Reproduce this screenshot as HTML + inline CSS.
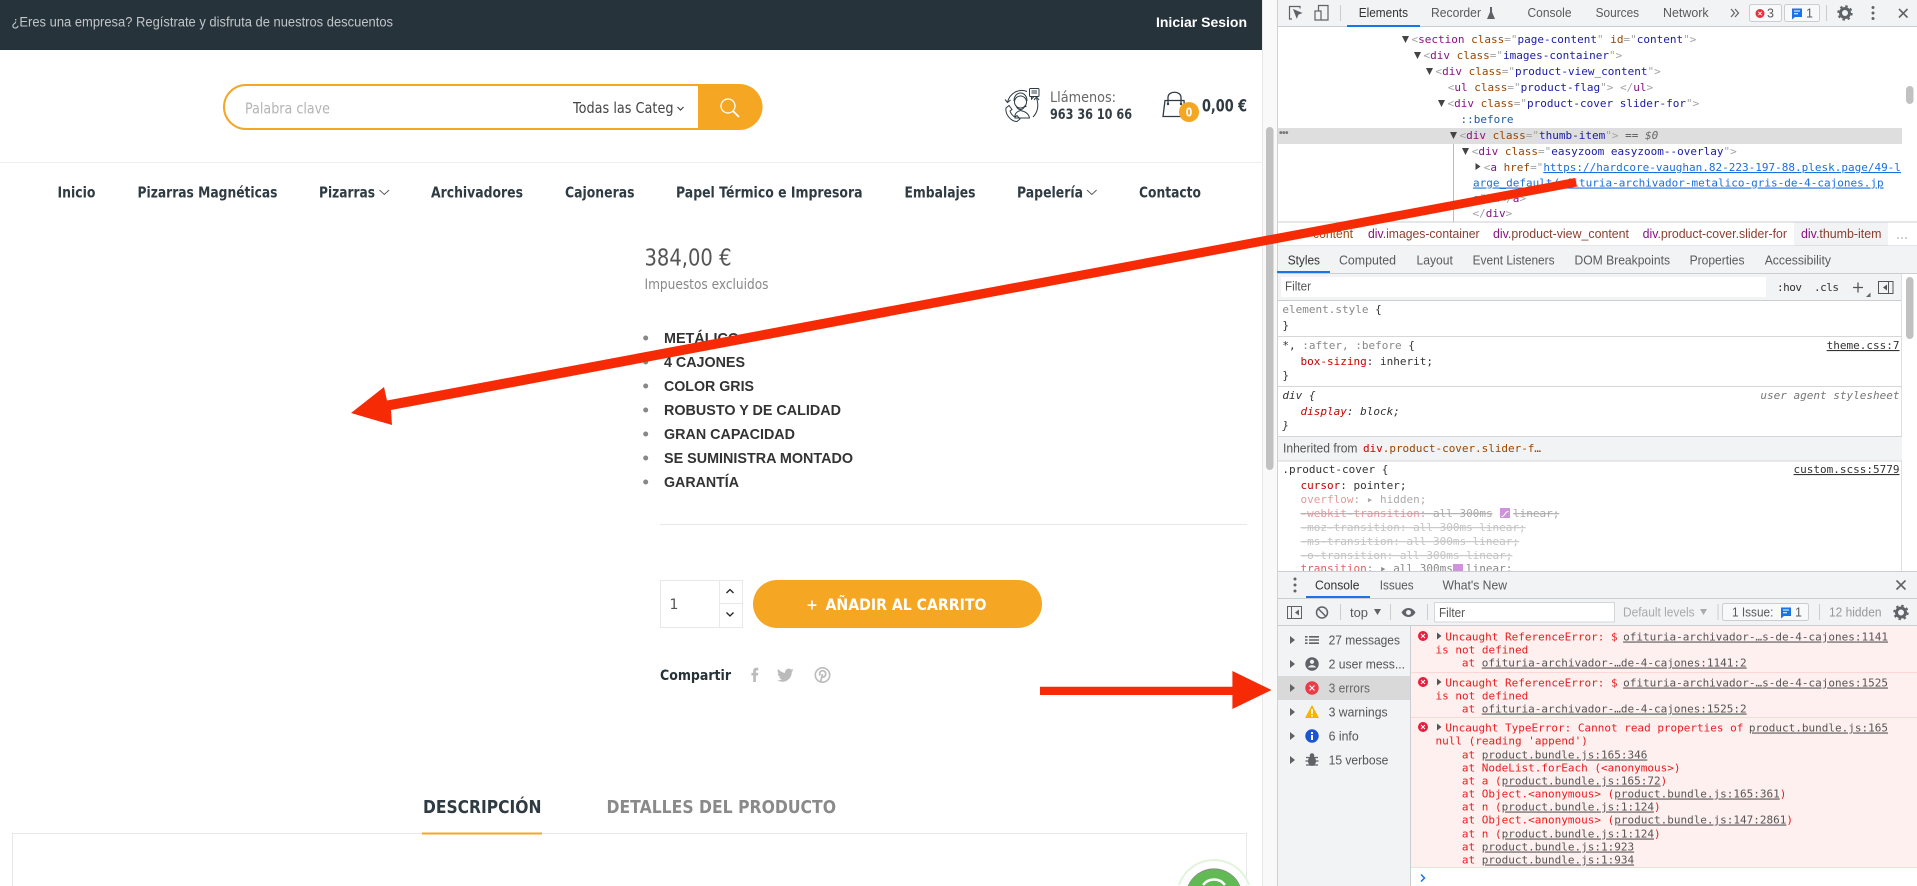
<!DOCTYPE html>
<html lang="es"><head><meta charset="utf-8"><title>Ofituria archivador metalico</title>
<style>
html,body{margin:0;padding:0;background:#fff;width:1917px;height:886px;overflow:hidden}
svg{display:block}
.o{font-family:"DejaVu Sans",sans-serif}
.ob{font-family:"DejaVu Sans",sans-serif;font-weight:700}
.a{font-family:"Liberation Sans",Arial,sans-serif}
.ab{font-family:"Liberation Sans",Arial,sans-serif;font-weight:700}
.m{font-family:"DejaVu Sans Mono",monospace;font-size:11px}
.t{fill:#881280}.n{fill:#994500}.v{fill:#1a1aa6}.g{fill:#a3a3a3}
.u{font-family:"Liberation Sans",Arial,sans-serif;font-size:12.5px;fill:#5a5a5a}
.e{fill:#e81c1c}.l{fill:#555;text-decoration:underline}
.r{fill:#c80000}.s{text-decoration:line-through}
</style></head><body>
<svg xmlns="http://www.w3.org/2000/svg" width="1917" height="886" viewBox="0 0 1917 886">
<rect width="1917" height="886" fill="#fff"/>
<!-- top bar -->
<rect width="1262" height="50" fill="#27333a"/>
<text class="a" x="11.5" y="26.5" font-size="13.5" fill="#c0c5c8" textLength="381.5" lengthAdjust="spacingAndGlyphs">¿Eres una empresa? Regístrate y disfruta de nuestros descuentos</text>
<text class="ab" x="1156" y="27" font-size="14" fill="#fff" textLength="91" lengthAdjust="spacingAndGlyphs">Iniciar Sesion</text>
<!-- search -->
<rect x="224" y="85" width="530" height="44" rx="22" fill="#fff" stroke="#f5a623" stroke-width="2"/>
<path d="M698 84H739.5A23 23 0 0 1 739.5 130H698Z" fill="#f5a623"/>
<text class="o" x="245" y="113.500" font-size="15" fill="#b4b4b4" textLength="85" lengthAdjust="spacingAndGlyphs">Palabra clave</text>
<text class="o" x="573" y="113" font-size="15" fill="#444" textLength="100.500" lengthAdjust="spacingAndGlyphs">Todas las Categ</text>
<path d="M677.500 107l3 3 3-3" fill="none" stroke="#444" stroke-width="1.200"/>
<circle cx="728" cy="106" r="7" fill="none" stroke="#fff" stroke-width="1.300"/>
<path d="M733 111l6 6" stroke="#fff" stroke-width="1.800" fill="none"/>
<!-- call icon -->
<g fill="none" stroke="#2f3b43" stroke-width="1">
<rect x="1029.500" y="88.500" width="9.500" height="8" rx="1"/>
<path d="M1031.500 91h5.500M1031.500 93h5.500M1031.500 96.500v2.500l2.500-2.500"/>
<path d="M1027 91.500C1019 88 1010 93 1007.500 102"/><path d="M1005 99.500l2.500 3 3-2.500"/>
<path d="M1036.500 98C1039 105 1038 112 1033 117"/><path d="M1034 100l2.500-3 2.500 3"/>
<circle cx="1020.500" cy="102" r="6"/>
<path d="M1014 101c0-5 3-8 6.500-8s6.500 3 6.500 8M1016 105.500c1 3 3 4 4.500 4s3.500-1 4.500-4M1026.500 106l-3 1.500"/>
<path d="M1015 118v-2c0-3 3-5 5.500-5.500 2.500.5 8 2 9 7.500z"/>
<path d="M1006 108l3-2.500 3 4-2 1.500c1 3 3 5 5 6l2-1.500 3 3.500-3 2.500c-6 0-12-7-11-13.500z"/>
</g>
<text class="o" x="1050" y="102" font-size="14.500" fill="#666" textLength="66" lengthAdjust="spacingAndGlyphs">Llámenos:</text>
<text class="ob" x="1050" y="119" font-size="14" fill="#333d45" textLength="82" lengthAdjust="spacingAndGlyphs">963 36 10 66</text>
<!-- bag -->
<g fill="none" stroke="#2f3b43" stroke-width="1.300">
<path d="M1165 100.500H1184L1185 116.500H1163Z"/>
<path d="M1168 104V97.500C1168 90.500 1181 90.500 1181 97.500V104"/>
</g>
<circle cx="1168" cy="104" r="1.200" fill="#2f3b43"/><circle cx="1181" cy="104" r="1.200" fill="#2f3b43"/>
<circle cx="1189" cy="112" r="10" fill="#f5a623"/>
<text class="ob" x="1185.750" y="116.500" font-size="12" fill="#fff" textLength="6.500" lengthAdjust="spacingAndGlyphs">0</text>
<text class="ob" x="1202" y="111.500" font-size="17" fill="#2f3b43" textLength="45" lengthAdjust="spacingAndGlyphs">0,00 €</text>
<!-- nav -->
<rect y="162" width="1262" height="1" fill="#eceeef"/>
<g fill="#2f3b43" font-size="15">
<text class="ob" x="57.500" y="197.500" textLength="38" lengthAdjust="spacingAndGlyphs">Inicio</text>
<text class="ob" x="137.500" y="197.500" textLength="140" lengthAdjust="spacingAndGlyphs">Pizarras Magnéticas</text>
<text class="ob" x="319" y="197.500" textLength="56" lengthAdjust="spacingAndGlyphs">Pizarras</text>
<text class="ob" x="431" y="197.500" textLength="92" lengthAdjust="spacingAndGlyphs">Archivadores</text>
<text class="ob" x="565" y="197.500" textLength="69.500" lengthAdjust="spacingAndGlyphs">Cajoneras</text>
<text class="ob" x="676" y="197.500" textLength="186.500" lengthAdjust="spacingAndGlyphs">Papel Térmico e Impresora</text>
<text class="ob" x="904.500" y="197.500" textLength="71" lengthAdjust="spacingAndGlyphs">Embalajes</text>
<text class="ob" x="1017" y="197.500" textLength="66" lengthAdjust="spacingAndGlyphs">Papelería</text>
<text class="ob" x="1139" y="197.500" textLength="62" lengthAdjust="spacingAndGlyphs">Contacto</text>
</g>
<path d="M379.500 190l4.800 4.500 4.800-4.500M1087 190l4.800 4.500 4.800-4.500" fill="none" stroke="#555" stroke-width=".9"/>
<!-- price -->
<text class="o" x="644.500" y="265.500" font-size="23" fill="#555" textLength="87" lengthAdjust="spacingAndGlyphs">384,00 €</text>
<text class="o" x="644.500" y="289" font-size="14" fill="#888" textLength="124" lengthAdjust="spacingAndGlyphs">Impuestos excluidos</text>
<!-- list -->
<g fill="#888"><circle cx="645.700" cy="338" r="2.500"/><circle cx="645.700" cy="362" r="2.500"/><circle cx="645.700" cy="386" r="2.500"/><circle cx="645.700" cy="410" r="2.500"/><circle cx="645.700" cy="434" r="2.500"/><circle cx="645.700" cy="458" r="2.500"/><circle cx="645.700" cy="482" r="2.500"/></g>
<g fill="#333" font-size="15">
<text class="ab" x="664" y="343" textLength="75" lengthAdjust="spacingAndGlyphs">METÁLICO</text>
<text class="ab" x="664" y="367" textLength="81" lengthAdjust="spacingAndGlyphs">4 CAJONES</text>
<text class="ab" x="664" y="391" textLength="90" lengthAdjust="spacingAndGlyphs">COLOR GRIS</text>
<text class="ab" x="664" y="415" textLength="177" lengthAdjust="spacingAndGlyphs">ROBUSTO Y DE CALIDAD</text>
<text class="ab" x="664" y="439" textLength="131" lengthAdjust="spacingAndGlyphs">GRAN CAPACIDAD</text>
<text class="ab" x="664" y="463" textLength="189" lengthAdjust="spacingAndGlyphs">SE SUMINISTRA MONTADO</text>
<text class="ab" x="664" y="487" textLength="75" lengthAdjust="spacingAndGlyphs">GARANTÍA</text>
</g>
<rect x="660" y="524" width="587" height="1" fill="#e8e8e8"/>
<!-- qty -->
<rect x="660.500" y="580.500" width="82" height="47" fill="#fff" stroke="#e8e8e8"/>
<path d="M719.500 580v48M719.500 603.500H743" stroke="#e8e8e8" fill="none"/>
<text class="o" x="669.500" y="609" font-size="14" fill="#555">1</text>
<path d="M726.500 593l3.500-3.500 3.500 3.500M726.500 612.500l3.500 3.500 3.500-3.500" fill="none" stroke="#222" stroke-width="1.300"/>
<rect x="753" y="580" width="289" height="48" rx="24" fill="#f5a623"/>
<text class="ob" x="812" y="609.500" font-size="14" fill="#fff" text-anchor="middle">+</text>
<text class="ob" x="825.500" y="610" font-size="16" fill="#fff" textLength="161" lengthAdjust="spacingAndGlyphs">AÑADIR AL CARRITO</text>
<!-- share -->
<text class="ob" x="660" y="680" font-size="14" fill="#263238" textLength="71" lengthAdjust="spacingAndGlyphs">Compartir</text>
<path d="M753.200 682v-6.500h-1.800v-2.600h1.800v-1.800c0-2.200 1.300-3.300 3.200-3.300h1.900v2.600h-1.200c-.9 0-1.200.4-1.200 1.200v1.300h2.400l-.4 2.600h-2v6.500z" fill="#bbb"/>
<g transform="translate(786 675) scale(.85) translate(-787 -676)"><path d="M778.500 669.500c2 2.500 4.500 3.800 7.500 4-.5-3 2-5.500 4.700-5 1 0 1.800.5 2.500 1.200.8-.2 1.700-.5 2.300-1-.3 1-1 1.700-1.800 2.200.8-.1 1.500-.3 2.100-.6-.5.800-1.200 1.500-2 2 .2 6-4.500 11.700-11 11.700-2.200 0-4.200-.6-6-1.800 2.200.2 4-.4 5.500-1.500-1.800 0-3-1.200-3.600-2.500.6.100 1.200.1 1.700-.1-1.900-.5-3.100-2-3.100-3.900.5.300 1.100.5 1.700.5-1.800-1.200-2.300-3.500-1.500-5.200z" fill="#bbb"/></g>
<circle cx="822.500" cy="675" r="7.200" fill="none" stroke="#bbb" stroke-width="1.600"/>
<path d="M820.500 682l2-8M820 675.500c-1.300-3 1-5 2.800-4.800 2.700.3 3.500 2.700 2.500 4.800-.9 2-3 1.800-3.600.7" fill="none" stroke="#bbb" stroke-width="1.700"/>
<!-- tabs -->
<text class="ob" x="423" y="813" font-size="17.500" fill="#2f3b43" textLength="118.500" lengthAdjust="spacingAndGlyphs">DESCRIPCIÓN</text>
<text class="ob" x="606.500" y="813" font-size="17.500" fill="#8a8a8a" textLength="229.500" lengthAdjust="spacingAndGlyphs">DETALLES DEL PRODUCTO</text>
<path d="M12.500 886V833.500H1246.500V886" fill="none" stroke="#e8e8e8"/>
<rect x="422" y="832.500" width="120" height="2" fill="#f5a623"/>
<!-- whatsapp -->
<path d="M1179 885A37 37 0 0 1 1249 885Z" fill="#fff"/>
<path d="M1179 885A37 37 0 0 1 1249 885" fill="none" stroke="#e2f4dc" stroke-width="2"/>
<path d="M1187.600 886A28.600 28.600 0 0 1 1240.400 886Z" fill="#8a8a8a"/>
<path d="M1188 886A28.600 28.600 0 0 1 1240 886Z" fill="#62ba55"/>
<path d="M1203.100 885A13.500 13.500 0 0 1 1224.900 885" fill="none" stroke="#fff" stroke-width="2.500"/>
<!-- scrollbar -->
<rect x="1262" y="0" width="15.500" height="886" fill="#f9f9f9"/>
<rect x="1262" y="0" width="1" height="886" fill="#e8e8e8"/>
<rect x="1266" y="127" width="7.500" height="343" rx="3.700" fill="#c1c1c1"/>
<!-- DEVTOOLS -->
<rect x="1277" y="0" width="640" height="886" fill="#fff"/>
<rect x="1277" y="0" width="1" height="886" fill="#cfd1d4"/>
<rect x="1278" y="0" width="639" height="26" fill="#f1f3f4"/>
<rect x="1278" y="26" width="639" height="1" fill="#cbcdd1"/>
<rect x="1347" y="25" width="73" height="2" fill="#1a73e8"/>
<g fill="none" stroke="#5f6368" stroke-width="1.200">
<path d="M1300 8.500V6.500H1289.500V19H1292"/><path d="M1294 10l7 3-3 1.200-1.200 3z" fill="#5f6368"/>
<rect x="1315" y="11" width="6" height="9"/><path d="M1318.500 11V5.500H1328V20H1321"/>
</g>
<rect x="1340" y="5" width="1" height="16" fill="#cbcdd1"/>
<text class="u" x="1358.700" y="17" style="fill:#333" textLength="49.300" lengthAdjust="spacingAndGlyphs">Elements</text>
<text class="u" x="1431" y="17" textLength="50" lengthAdjust="spacingAndGlyphs">Recorder</text>
<path d="M1489 7h4M1490 7v5l-3 7h8l-3-7V7z" fill="#5f6368"/>
<text class="u" x="1527.500" y="17" textLength="44" lengthAdjust="spacingAndGlyphs">Console</text>
<text class="u" x="1595.600" y="17" textLength="43.500" lengthAdjust="spacingAndGlyphs">Sources</text>
<text class="u" x="1663" y="17" textLength="45.600" lengthAdjust="spacingAndGlyphs">Network</text>
<path d="M1731 9l3.500 4-3.500 4M1735 9l3.500 4-3.500 4" fill="none" stroke="#5f6368" stroke-width="1.200"/>
<rect x="1749.500" y="4.500" width="32" height="17" rx="2" fill="#f8f9fa" stroke="#cbcdd1"/>
<circle cx="1760" cy="13.500" r="4.500" fill="#e8303a"/>
<path d="M1758.300 11.800l3.400 3.400m0-3.400l-3.400 3.400" stroke="#fff" stroke-width=".9"/>
<text class="u" x="1767" y="17.500">3</text>
<rect x="1784.500" y="4.500" width="35" height="17" rx="2" fill="#f8f9fa" stroke="#cbcdd1"/>
<path d="M1792 8.500h10v8.500h-7l-3 2.500z" fill="#1a73e8"/>
<path d="M1794 11h6M1794 13.800h4" stroke="#fff" stroke-width="1"/>
<text class="u" x="1806" y="17.500">1</text>
<rect x="1826" y="5" width="1" height="16" fill="#cbcdd1"/>
<circle cx="1845" cy="13" r="4.500" fill="none" stroke="#5f6368" stroke-width="3"/>
<circle cx="1845" cy="13" r="6.800" fill="none" stroke="#5f6368" stroke-width="1.800" stroke-dasharray="2.500 2.850"/>
<g fill="#5f6368"><circle cx="1873" cy="7.500" r="1.500"/><circle cx="1873" cy="13" r="1.500"/><circle cx="1873" cy="18.500" r="1.500"/></g>
<path d="M1899 9l8.500 8.500m0-8.500l-8.500 8.500" stroke="#5f6368" stroke-width="1.600"/>
<!-- DOM -->
<rect x="1278" y="128" width="624" height="16" fill="#dedede"/>
<rect x="1902" y="27" width="15" height="195" fill="#fff"/>
<rect x="1906" y="86" width="7.500" height="18" rx="3.700" fill="#c1c1c1"/>
<rect x="1453" y="144" width="1" height="78" fill="#a4bfe6"/>
<text class="a" x="1279" y="136" font-size="10" font-weight="700" letter-spacing="-.5" fill="#777">•••</text>
<g fill="#444">
<path d="M1402 36h7l-3.500 7zM1414 52h7l-3.500 7zM1426 68h7l-3.500 7zM1438 100h7l-3.500 7zM1450 132h7l-3.500 7zM1462 148h7l-3.500 7zM1475.500 163v7l5-3.500z"/>
</g>
<text class="m" x="1411.500" y="43"><tspan class="g">&lt;</tspan><tspan class="t">section</tspan> <tspan class="n">class</tspan><tspan class="g">="</tspan><tspan class="v">page-content</tspan><tspan class="g">"</tspan> <tspan class="n">id</tspan><tspan class="g">="</tspan><tspan class="v">content</tspan><tspan class="g">"&gt;</tspan></text>
<text class="m" x="1423.500" y="59"><tspan class="g">&lt;</tspan><tspan class="t">div</tspan> <tspan class="n">class</tspan><tspan class="g">="</tspan><tspan class="v">images-container</tspan><tspan class="g">"&gt;</tspan></text>
<text class="m" x="1435.500" y="75"><tspan class="g">&lt;</tspan><tspan class="t">div</tspan> <tspan class="n">class</tspan><tspan class="g">="</tspan><tspan class="v">product-view_content</tspan><tspan class="g">"&gt;</tspan></text>
<text class="m" x="1447.800" y="91"><tspan class="g">&lt;</tspan><tspan class="t">ul</tspan> <tspan class="n">class</tspan><tspan class="g">="</tspan><tspan class="v">product-flag</tspan><tspan class="g">"&gt; &lt;/</tspan><tspan class="t">ul</tspan><tspan class="g">&gt;</tspan></text>
<text class="m" x="1447.500" y="107"><tspan class="g">&lt;</tspan><tspan class="t">div</tspan> <tspan class="n">class</tspan><tspan class="g">="</tspan><tspan class="v">product-cover slider-for</tspan><tspan class="g">"&gt;</tspan></text>
<text class="m" x="1460.500" y="123" fill="#1a5ca6">::before</text>
<text class="m" x="1459.500" y="139"><tspan class="g">&lt;</tspan><tspan class="t">div</tspan> <tspan class="n">class</tspan><tspan class="g">="</tspan><tspan class="v">thumb-item</tspan><tspan class="g">"&gt;</tspan> <tspan fill="#555">==</tspan> <tspan fill="#666" font-style="italic">$0</tspan></text>
<text class="m" x="1471.800" y="155"><tspan class="g">&lt;</tspan><tspan class="t">div</tspan> <tspan class="n">class</tspan><tspan class="g">="</tspan><tspan class="v">easyzoom easyzoom--overlay</tspan><tspan class="g">"&gt;</tspan></text>
<text class="m" x="1483.700" y="171"><tspan class="g">&lt;</tspan><tspan class="t">a</tspan> <tspan class="n">href</tspan><tspan class="g">="</tspan><tspan fill="#1a6fe0" text-decoration="underline">https://hardcore-vaughan.82-223-197-88.plesk.page/49-l</tspan></text>
<text class="m" x="1473" y="186.500" fill="#1a6fe0" text-decoration="underline">arge_default/ofituria-archivador-metalico-gris-de-4-cajones.jp</text>
<text class="m" x="1473" y="202"><tspan fill="#1a6fe0" text-decoration="underline">g</tspan><tspan class="g">"&gt;…&lt;/</tspan><tspan class="t">a</tspan><tspan class="g">&gt;</tspan></text>
<text class="m" x="1472.500" y="217"><tspan class="g">&lt;/</tspan><tspan class="t">div</tspan><tspan class="g">&gt;</tspan></text>
<!-- breadcrumb -->
<rect x="1278" y="222" width="639" height="24" fill="#fff"/>
<rect x="1278" y="221.500" width="639" height="1" fill="#cbcdd1"/>
<rect x="1278" y="245.500" width="639" height="1" fill="#cbcdd1"/>
<rect x="1794" y="222.500" width="94" height="23" fill="#f1f3f4"/>
<text class="u" x="1313" y="238" style="fill:#9a4a12" textLength="40" lengthAdjust="spacingAndGlyphs">content</text>
<text class="u" x="1368" y="238" textLength="111.600" lengthAdjust="spacingAndGlyphs"><tspan style="fill:#881280">div</tspan><tspan style="fill:#8a3f30">.images-container</tspan></text>
<text class="u" x="1493" y="238" textLength="136" lengthAdjust="spacingAndGlyphs"><tspan style="fill:#881280">div</tspan><tspan style="fill:#8a3f30">.product-view_content</tspan></text>
<text class="u" x="1642.600" y="238" textLength="144.400" lengthAdjust="spacingAndGlyphs"><tspan style="fill:#881280">div</tspan><tspan style="fill:#8a3f30">.product-cover.slider-for</tspan></text>
<text class="u" x="1801" y="238" textLength="80.500" lengthAdjust="spacingAndGlyphs"><tspan style="fill:#881280">div</tspan><tspan style="fill:#8a3f30">.thumb-item</tspan></text>
<g fill="#999"><circle cx="1898" cy="238" r=".8"/><circle cx="1902" cy="238" r=".8"/><circle cx="1906" cy="238" r=".8"/></g>
<!-- styles tabs -->
<rect x="1278" y="246" width="639" height="27" fill="#f1f3f4"/>
<rect x="1278" y="273" width="639" height="1" fill="#cbcdd1"/>
<rect x="1277" y="271" width="53" height="2" fill="#1a73e8"/>
<text class="u" x="1287.700" y="264.500" style="fill:#333" textLength="32.300" lengthAdjust="spacingAndGlyphs">Styles</text>
<text class="u" x="1339" y="264.500" textLength="57" lengthAdjust="spacingAndGlyphs">Computed</text>
<text class="u" x="1416.500" y="264.500" textLength="36.300" lengthAdjust="spacingAndGlyphs">Layout</text>
<text class="u" x="1472.600" y="264.500" textLength="82" lengthAdjust="spacingAndGlyphs">Event Listeners</text>
<text class="u" x="1574.500" y="264.500" textLength="95.500" lengthAdjust="spacingAndGlyphs">DOM Breakpoints</text>
<text class="u" x="1689.600" y="264.500" textLength="54.900" lengthAdjust="spacingAndGlyphs">Properties</text>
<text class="u" x="1764.700" y="264.500" textLength="66.300" lengthAdjust="spacingAndGlyphs">Accessibility</text>
<!-- filter row -->
<rect x="1278" y="274" width="624" height="26" fill="#f1f3f4"/>
<rect x="1281" y="277" width="485" height="20" fill="#fff"/>
<text class="u" x="1285" y="290.500" style="fill:#555" textLength="26" lengthAdjust="spacingAndGlyphs">Filter</text>
<text class="m" x="1777" y="291" fill="#333" textLength="25">:hov</text>
<text class="m" x="1814" y="291" fill="#333" textLength="25">.cls</text>
<path d="M1853 287.500h10M1858 282.500v10" stroke="#555" stroke-width="1.300"/>
<path d="M1866 297h4.500v-4.500z" fill="#666"/>
<rect x="1878.500" y="281.500" width="14.500" height="12" fill="none" stroke="#555"/>
<path d="M1888.500 281.500v12" stroke="#555"/><path d="M1887 284.500v6l-4-3z" fill="#555"/>
<rect x="1278" y="300" width="624" height="1" fill="#cbcdd1"/>
<!-- styles panes -->
<rect x="1902" y="274" width="15" height="297" fill="#fff"/>
<rect x="1906" y="277" width="7.500" height="62" rx="3.700" fill="#c1c1c1"/>
<rect x="1901" y="274" width="1" height="297" fill="#e0e0e0"/>
<text class="m" x="1282.400" y="313" fill="#888">element.style <tspan fill="#333">{</tspan></text>
<text class="m" x="1282.400" y="329" fill="#333">}</text>
<rect x="1278" y="336" width="624" height="1" fill="#d5d6d8"/>
<text class="m" x="1282.400" y="349" fill="#333">*, <tspan fill="#888">:after, :before</tspan> {</text>
<text class="m" x="1300.500" y="365" fill="#333"><tspan fill="#c80000">box-sizing</tspan>: inherit;</text>
<text class="m" x="1282.400" y="379" fill="#333">}</text>
<text class="m" x="1899.500" y="349" fill="#333" text-anchor="end" text-decoration="underline">theme.css:7</text>
<rect x="1278" y="386" width="624" height="1" fill="#d5d6d8"/>
<g font-style="italic">
<text class="m" x="1282.400" y="399" fill="#333">div {</text>
<text class="m" x="1300.500" y="415" fill="#333"><tspan fill="#c80000">display</tspan>: block;</text>
<text class="m" x="1282.400" y="429" fill="#333">}</text>
<text class="m" x="1899.500" y="399" fill="#777" text-anchor="end">user agent stylesheet</text>
</g>
<rect x="1278" y="436" width="624" height="25" fill="#f1f3f4"/>
<rect x="1278" y="436" width="624" height="1" fill="#d5d6d8"/>
<rect x="1278" y="460.500" width="624" height="1" fill="#d5d6d8"/>
<text class="u" x="1283" y="452.500" style="fill:#555" textLength="74.500" lengthAdjust="spacingAndGlyphs">Inherited from</text>
<text class="m" x="1363" y="452" textLength="178"><tspan fill="#c80000">div</tspan><tspan fill="#994500">.product-cover.slider-f…</tspan></text>
<text class="m" x="1282.400" y="473" fill="#333">.product-cover {</text>
<text class="m" x="1899.500" y="473" fill="#333" text-anchor="end" text-decoration="underline">custom.scss:5779</text>
<text class="m" x="1300.500" y="489" fill="#333"><tspan fill="#c80000">cursor</tspan>: pointer;</text>
<text class="m" x="1300.500" y="503" fill="#aaa"><tspan fill="#e69a9a">overflow</tspan>: <tspan fill="#aaa">▸</tspan> hidden;</text>
<text class="m s" x="1300.500" y="517" fill="#aaa"><tspan fill="#e69a9a">-webkit-transition</tspan>: all 300ms</text>
<rect x="1500" y="508" width="10" height="10" fill="#cf92dc"/><path d="M1501.500 516.500c4 0 3-5 7-5" stroke="#fff" fill="none"/>
<text class="m s" x="1513" y="517" fill="#aaa">linear;</text>
<text class="m s" x="1300.500" y="531" fill="#c4c4c4">-moz-transition: all 300ms linear;</text>
<text class="m s" x="1300.500" y="545" fill="#c4c4c4">-ms-transition: all 300ms linear;</text>
<text class="m s" x="1300.500" y="559" fill="#c4c4c4">-o-transition: all 300ms linear;</text>
<text class="m" x="1300.500" y="572" fill="#888"><tspan fill="#e06060">transition</tspan>: ▸ all 300ms</text>
<rect x="1453" y="564" width="10" height="7" fill="#cf92dc"/>
<text class="m" x="1466" y="572" fill="#888">linear;</text>
<!-- drawer -->
<rect x="1278" y="571" width="639" height="27" fill="#f1f3f4"/>
<rect x="1278" y="571" width="639" height="1" fill="#cbcdd1"/>
<rect x="1278" y="598" width="639" height="1" fill="#cbcdd1"/>
<g fill="#5f6368"><circle cx="1295" cy="579" r="1.500"/><circle cx="1295" cy="585" r="1.500"/><circle cx="1295" cy="591" r="1.500"/></g>
<rect x="1306" y="596" width="64" height="2" fill="#1a73e8"/>
<text class="u" x="1315" y="589.500" style="fill:#333" textLength="44.500" lengthAdjust="spacingAndGlyphs">Console</text>
<text class="u" x="1379.800" y="589.500" textLength="33.800" lengthAdjust="spacingAndGlyphs">Issues</text>
<text class="u" x="1442.500" y="589.500" textLength="64.500" lengthAdjust="spacingAndGlyphs">What's New</text>
<path d="M1896.500 580.500l9 9m0-9l-9 9" stroke="#5f6368" stroke-width="1.600"/>
<!-- console toolbar -->
<rect x="1278" y="599" width="639" height="26" fill="#f1f3f4"/>
<rect x="1278" y="625" width="639" height="1" fill="#cbcdd1"/>
<rect x="1287.500" y="606.500" width="14" height="12" fill="none" stroke="#5f6368"/>
<path d="M1291.500 606.500v12" stroke="#5f6368"/><path d="M1299 609.500v6l-4-3z" fill="#5f6368"/>
<circle cx="1322" cy="612.500" r="5.500" fill="none" stroke="#5f6368" stroke-width="1.500"/>
<path d="M1318 608.500l8 8" stroke="#5f6368" stroke-width="1.500"/>
<rect x="1340" y="604" width="1" height="16" fill="#cbcdd1"/>
<text class="u" x="1350" y="617" textLength="18" lengthAdjust="spacingAndGlyphs">top</text>
<path d="M1374 609h7l-3.500 6z" fill="#5f6368"/>
<rect x="1390" y="604" width="1" height="16" fill="#cbcdd1"/>
<path d="M1401.500 612.500c3.500-6 10.500-6 14 0-3.500 6-10.500 6-14 0z" fill="#5f6368"/>
<circle cx="1408.500" cy="612.500" r="2.500" fill="#f1f3f4"/>
<rect x="1427" y="604" width="1" height="16" fill="#cbcdd1"/>
<rect x="1434.500" y="602.500" width="180" height="19.500" fill="#fff" stroke="#d5d6d8"/>
<text class="u" x="1439" y="617" style="fill:#555" textLength="26" lengthAdjust="spacingAndGlyphs">Filter</text>
<text class="u" x="1623" y="616.500" style="fill:#aaa" textLength="71.600" lengthAdjust="spacingAndGlyphs">Default levels</text>
<path d="M1700 609h7l-3.500 6z" fill="#aaa"/>
<rect x="1717.500" y="604" width="1" height="16" fill="#cbcdd1"/>
<rect x="1722.500" y="603.500" width="86" height="17" rx="2" fill="#f8f9fa" stroke="#cbcdd1"/>
<text class="u" x="1732" y="616.500" textLength="41.400" lengthAdjust="spacingAndGlyphs">1 Issue:</text>
<path d="M1781 607.500h10v8.500h-7l-3 2.500z" fill="#1a73e8"/>
<path d="M1783 610h6M1783 612.800h4" stroke="#fff" stroke-width="1"/>
<text class="u" x="1795" y="616.500">1</text>
<rect x="1819" y="604" width="1" height="16" fill="#cbcdd1"/>
<text class="u" x="1829" y="616.500" style="fill:#999" textLength="52.500" lengthAdjust="spacingAndGlyphs">12 hidden</text>
<circle cx="1901" cy="612.500" r="4.500" fill="none" stroke="#5f6368" stroke-width="3"/>
<circle cx="1901" cy="612.500" r="6.800" fill="none" stroke="#5f6368" stroke-width="1.800" stroke-dasharray="2.500 2.850"/>
<!-- sidebar -->
<rect x="1278" y="626" width="132" height="260" fill="#f1f3f4"/>
<rect x="1278" y="676" width="132" height="24" fill="#d9d9d9"/>
<rect x="1410" y="626" width="1" height="260" fill="#cbcdd1"/>
<g fill="#5f6368">
<path d="M1290 636v8l5-4zM1290 660v8l5-4zM1290 684v8l5-4zM1290 708v8l5-4zM1290 732v8l5-4zM1290 756v8l5-4z"/>
<path d="M1305 636h2.500v1.600H1305zM1309 636h10v1.600h-10zM1305 639.200h2.500v1.600H1305zM1309 639.200h10v1.600h-10zM1305 642.400h2.500v1.600H1305zM1309 642.400h10v1.600h-10z"/>
<circle cx="1312" cy="664" r="6.700"/>
</g>
<circle cx="1312" cy="661.800" r="2.100" fill="#f1f3f4"/><path d="M1308 667.500c1-3 7-3 8 0z" fill="#f1f3f4"/>
<circle cx="1312" cy="688" r="6.700" fill="#ea3b46"/>
<path d="M1309.500 685.500l5 5m0-5l-5 5" stroke="#fff" stroke-width="1.200"/>
<path d="M1312 705l7 13h-14z" fill="#f4b400"/><rect x="1311.200" y="709" width="1.600" height="5" fill="#fff"/><rect x="1311.200" y="715" width="1.600" height="1.600" fill="#fff"/>
<circle cx="1312" cy="736" r="6.700" fill="#1a56d0"/><rect x="1311" y="735" width="2" height="5" fill="#fff"/><rect x="1311" y="732" width="2" height="2" fill="#fff"/>
<ellipse cx="1312" cy="761" rx="4" ry="5" fill="#5f6368"/><circle cx="1312" cy="755.500" r="2.300" fill="#5f6368"/>
<path d="M1306 757.500l12 0M1305.500 761h13M1306 765l12 0" stroke="#5f6368" stroke-width="1.300"/>
<text class="u" x="1328.600" y="644.500" style="fill:#555" textLength="71.400" lengthAdjust="spacingAndGlyphs">27 messages</text>
<text class="u" x="1328.600" y="668.500" style="fill:#555" textLength="76.400" lengthAdjust="spacingAndGlyphs">2 user mess...</text>
<text class="u" x="1328.600" y="692.500" style="fill:#666" textLength="41.400" lengthAdjust="spacingAndGlyphs">3 errors</text>
<text class="u" x="1328.600" y="716.500" style="fill:#555" textLength="59" lengthAdjust="spacingAndGlyphs">3 warnings</text>
<text class="u" x="1328.600" y="740.500" style="fill:#555" textLength="30.100" lengthAdjust="spacingAndGlyphs">6 info</text>
<text class="u" x="1328.600" y="764.500" style="fill:#555" textLength="59.800" lengthAdjust="spacingAndGlyphs">15 verbose</text>
<!-- console messages -->
<rect x="1411" y="626" width="506" height="241" fill="#fff0f0"/>
<rect x="1411" y="672" width="506" height="1" fill="#ffd6d6"/>
<rect x="1411" y="717" width="506" height="1" fill="#ffd6d6"/>
<rect x="1411" y="867" width="506" height="1" fill="#ffd6d6"/>
<g fill="#e81c3c"><circle cx="1423" cy="636" r="5"/><circle cx="1423" cy="682" r="5"/><circle cx="1423" cy="727" r="5"/></g>
<path d="M1421 634l4 4m0-4l-4 4M1421 680l4 4m0-4l-4 4M1421 725l4 4m0-4l-4 4" stroke="#fff" stroke-width="1"/>
<path d="M1437 632.500v7l4.500-3.500zM1437 678.500v7l4.500-3.500zM1437 723.500v7l4.500-3.500z" fill="#555"/>
<text class="m e" x="1445.400" y="640.500">Uncaught ReferenceError: $</text>
<text class="m l" x="1888" y="640.500" text-anchor="end">ofituria-archivador-…s-de-4-cajones:1141</text>
<text class="m e" x="1435.500" y="653.500">is not defined</text>
<text class="m e" x="1461.900" y="666.500">at <tspan fill="#555" text-decoration="underline">ofituria-archivador-…de-4-cajones:1141:2</tspan></text>
<text class="m e" x="1445.400" y="686.500">Uncaught ReferenceError: $</text>
<text class="m l" x="1888" y="686.500" text-anchor="end">ofituria-archivador-…s-de-4-cajones:1525</text>
<text class="m e" x="1435.500" y="699.500">is not defined</text>
<text class="m e" x="1461.900" y="712.500">at <tspan fill="#555" text-decoration="underline">ofituria-archivador-…de-4-cajones:1525:2</tspan></text>
<text class="m e" x="1445.400" y="731.500">Uncaught TypeError: Cannot read properties of</text>
<text class="m l" x="1888" y="731.500" text-anchor="end">product.bundle.js:165</text>
<text class="m e" x="1435.500" y="744.500">null (reading 'append')</text>
<text class="m e" x="1461.900" y="758.500">at <tspan fill="#555" text-decoration="underline">product.bundle.js:165:346</tspan></text>
<text class="m e" x="1461.900" y="771.500">at NodeList.forEach (&lt;anonymous&gt;)</text>
<text class="m e" x="1461.900" y="784.500">at a (<tspan fill="#555" text-decoration="underline">product.bundle.js:165:72</tspan>)</text>
<text class="m e" x="1461.900" y="797.500">at Object.&lt;anonymous&gt; (<tspan fill="#555" text-decoration="underline">product.bundle.js:165:361</tspan>)</text>
<text class="m e" x="1461.900" y="810.500">at n (<tspan fill="#555" text-decoration="underline">product.bundle.js:1:124</tspan>)</text>
<text class="m e" x="1461.900" y="823.500">at Object.&lt;anonymous&gt; (<tspan fill="#555" text-decoration="underline">product.bundle.js:147:2861</tspan>)</text>
<text class="m e" x="1461.900" y="837.500">at n (<tspan fill="#555" text-decoration="underline">product.bundle.js:1:124</tspan>)</text>
<text class="m e" x="1461.900" y="850.500">at <tspan fill="#555" text-decoration="underline">product.bundle.js:1:923</tspan></text>
<text class="m e" x="1461.900" y="863.500">at <tspan fill="#555" text-decoration="underline">product.bundle.js:1:934</tspan></text>
<path d="M1421 874.500l3.500 3.500-3.500 3.500" fill="none" stroke="#1a73e8" stroke-width="1.500"/>
<!-- red arrows -->
<path d="M351 413L384 387L387 400.500L1575 178L1577 186.500L391 410L392 425Z" fill="#f62a05"/>
<path d="M1040 686.700H1232.400V671L1271.500 690L1232.400 709V695H1040Z" fill="#f62a05"/>
</svg>
</body></html>
